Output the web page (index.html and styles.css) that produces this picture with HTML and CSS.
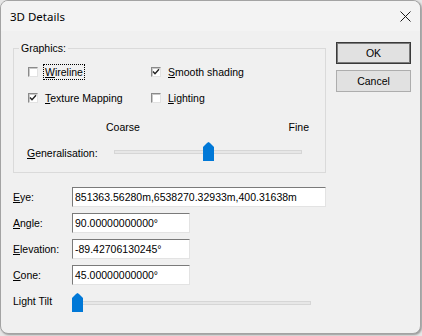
FILE: index.html
```html
<!DOCTYPE html>
<html>
<head>
<meta charset="utf-8">
<link rel="stylesheet" href="styles.css">
</head>
<body>
<div class="window">
  <div class="titlebar">
    <span class="title">3D Details</span>
    <svg class="close" width="11" height="11" viewBox="0 0 11 11"><path d="M0.5 0.5 L10.5 10.5 M10.5 0.5 L0.5 10.5" stroke="#1a1a1a" stroke-width="1" fill="none"/></svg>
  </div>
  <div class="content">
    <div class="top">
      <fieldset class="group">
        <legend class="legend">Graphics:</legend>
        <div class="checks">
          <label class="check"><span class="box"></span><span class="lbl focus"><u>W</u>ireline</span></label>
          <label class="check"><span class="box"><svg class="tick" width="8" height="8" viewBox="0 0 8 8"><path d="M1 3.5 L3 5.8 L7 1.2" stroke="#222" stroke-width="1.4" fill="none"/></svg></span><span class="lbl"><u>S</u>mooth shading</span></label>
          <label class="check"><span class="box"><svg class="tick" width="8" height="8" viewBox="0 0 8 8"><path d="M1 3.5 L3 5.8 L7 1.2" stroke="#222" stroke-width="1.4" fill="none"/></svg></span><span class="lbl"><u>T</u>exture Mapping</span></label>
          <label class="check"><span class="box"></span><span class="lbl"><u>L</u>ighting</span></label>
        </div>
        <div class="scale"><span>Coarse</span><span>Fine</span></div>
        <div class="gen-row">
          <span class="gen-label"><u>G</u>eneralisation:</span>
          <div class="slider gen-slider">
            <div class="track"></div>
            <div class="thumb" style="left: calc((100% - 11px) * 0.503)"></div>
          </div>
        </div>
      </fieldset>
      <div class="buttons">
        <button class="btn default">OK</button>
        <button class="btn">Cancel</button>
      </div>
    </div>
    <div class="fields">
      <span class="flabel"><u>E</u>ye:</span><div class="input wide">851363.56280m,6538270.32933m,400.31638m</div>
      <span class="flabel"><u>A</u>ngle:</span><div class="input">90.00000000000°</div>
      <span class="flabel"><u>E</u>levation:</span><div class="input">-89.42706130245°</div>
      <span class="flabel"><u>C</u>one:</span><div class="input">45.00000000000°</div>
    </div>
    <div class="tilt-row">
      <span class="tilt-label">Light Tilt</span>
      <div class="slider tilt-slider">
        <div class="track"></div>
        <div class="thumb" style="left: calc((100% - 11px) * 0)"></div>
      </div>
    </div>
  </div>
</div>
</body>
</html>
```
FILE: styles.css
```css
html, body {
  margin: 0;
  padding: 0;
}
body {
  background: #e6e6e6;
  width: 422px;
  height: 336px;
  overflow: hidden;
  font-family: "Liberation Sans", Arial, sans-serif;
  font-size: 10.5px;
  color: #000;
}
.window {
  box-sizing: border-box;
  width: 421px;
  height: 334px;
  border: 1px solid #a3a3a3;
  border-radius: 8px;
  background: #f0f0f0;
  overflow: hidden;
  box-shadow: 1px 1px 2px rgba(0,0,0,0.35);
}
.titlebar {
  height: 30px;
  background: #f3f3f3;
  display: flex;
  align-items: center;
  justify-content: space-between;
  padding: 0 9px 0 9px;
}
.title {
  font-family: "Noto Sans", "Liberation Sans", sans-serif;
  font-size: 11.5px;
  color: #000;
}
.close {
  display: block;
}
.content {
  padding-left: 11px;
}
.top {
  display: flex;
  align-items: flex-start;
}
.group {
  margin: 11px 0 0 1px;
  padding: 0 0 11px 13px;
  width: 313px;
  box-sizing: border-box;
  border: 1px solid #dadada;
  min-width: 0;
}
.legend {
  padding: 0 2px;
  margin-left: -8px;
  line-height: 13px;
  font-size: 10.5px;
}
.checks {
  margin-top: 4px;
  display: grid;
  grid-template-columns: 123px auto;
  grid-auto-rows: 26px;
}
.check {
  display: flex;
  align-items: center;
  margin-left: 1px;
}
.box {
  box-sizing: border-box;
  width: 10px;
  height: 10px;
  background: #fff;
  border: 1px solid;
  border-color: #8a8a8a #e2e2e2 #e2e2e2 #8a8a8a;
  box-shadow: inset 1px 1px 0 #c9c9c9;
  display: flex;
  align-items: center;
  justify-content: center;
  margin-right: 5px;
}
.tick {
  display: block;
}
.lbl {
  border: 1px solid transparent;
  padding: 1px 1px;
  line-height: 12px;
}
.lbl.focus {
  border: 1px dotted #000;
}
.scale {
  margin-top: 8px;
  line-height: 16px;
  display: flex;
  justify-content: space-between;
  margin-left: 79px;
  width: 203px;
}
.gen-row {
  margin-top: 7px;
  display: flex;
  align-items: flex-start;
}
.gen-label {
  width: 87px;
  line-height: 14px;
  margin-top: 4px;
}
.slider {
  position: relative;
  height: 19px;
}
.gen-slider {
  width: 188px;
}
.track {
  position: absolute;
  left: 0;
  right: 0;
  top: 8px;
  height: 4px;
  box-sizing: border-box;
  background: #e7e7e7;
  border: 1px solid #d6d6d6;
}
.thumb {
  position: absolute;
  top: 0;
  width: 11px;
  height: 19px;
  background: #0078d7;
  clip-path: polygon(0 5px, 4px 1px, 5.5px 0, 7px 1px, 11px 5px, 11px 19px, 0 19px);
}
.buttons {
  margin: 11px 0 0 10px;
  display: flex;
  flex-direction: column;
  gap: 6px;
}
.btn {
  box-sizing: border-box;
  width: 75px;
  height: 22px;
  background: #e1e1e1;
  border: 1px solid #adadad;
  font-family: "Liberation Sans", Arial, sans-serif;
  font-size: 10.5px;
  color: #000;
  padding: 0;
  margin: 0;
}
.btn.default {
  border: 1px solid #3a3a3a;
  box-shadow: inset 0 0 0 1px #7a7a7a;
}
.fields {
  margin-top: 14px;
  display: grid;
  grid-template-columns: 60px auto;
  grid-auto-rows: 20px;
  row-gap: 6px;
  align-items: center;
  justify-items: start;
}
.flabel {
  margin-left: 1px;
  line-height: 14px;
}
.input {
  box-sizing: border-box;
  width: 118px;
  height: 20px;
  background: #fff;
  border: 1px solid;
  border-color: #7a7a7a #e3e3e3 #e3e3e3 #7a7a7a;
  padding: 0 0 0 2px;
  line-height: 18px;
  white-space: nowrap;
  overflow: hidden;
}
.input.wide {
  width: 254px;
}
.tilt-row {
  margin-top: 8px;
  display: flex;
  align-items: flex-start;
}
.tilt-label {
  width: 59px;
  margin-left: 1px;
  line-height: 14px;
  margin-top: 1px;
}
.tilt-slider {
  width: 239px;
}
u {
  text-decoration: underline;
  text-underline-offset: 1px;
}
```
